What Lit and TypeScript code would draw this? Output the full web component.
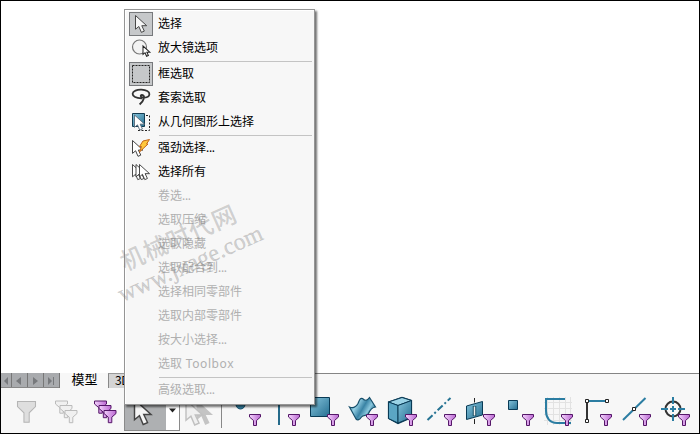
import { LitElement, html, svg, css } from "lit";
import { customElement } from "lit/decorators.js";

type Item = { text: string; icon?: string; boxed?: boolean; off?: boolean; line?: boolean };

const items: Item[] = [
  { text: "选择", icon: "cursor", boxed: true },
  { text: "放大镜选项", icon: "magnify" },
  { text: "框选取", icon: "box", boxed: true, line: true },
  { text: "套索选取", icon: "lasso" },
  { text: "从几何图形上选择", icon: "geometry" },
  { text: "强劲选择...", icon: "power", line: true },
  { text: "选择所有", icon: "all" },
  { text: "卷选...", off: true },
  { text: "选取压缩", off: true },
  { text: "选取隐藏", off: true },
  { text: "选取配合到...", off: true },
  { text: "选择相同零部件", off: true },
  { text: "选取内部零部件", off: true },
  { text: "按大小选择...", off: true },
  { text: "选取 Toolbox", off: true },
  { text: "高级选取...", off: true, line: true },
];

const arrow = "M0 0V14L3.4 11.2L6 17.2L9 15.9L6.4 10.4L11.4 10.4Z";

const menuIcons: Record<string, unknown> = {
  cursor: svg`<path d=${arrow} transform="translate(6.5 3.5) scale(.98)" fill="#f6f6f6" stroke="#444"/>`,
  magnify: svg`<circle cx="10.5" cy="11" r="7" fill="#f3f3f3" stroke="#777" stroke-width="1.2"/>
    <path d=${arrow} transform="translate(14 10) scale(.6)" fill="#fff" stroke="#222" stroke-width="1.7"/>`,
  box: svg`<rect x="3.5" y="3.5" width="17" height="17" fill="#c6c8ca" stroke="#222" stroke-dasharray="2 1"/>`,
  lasso: svg`<path d="M13 12.3C7 12.5 3.5 10.3 3.6 7.8C3.8 5 8 3.5 12.5 3.7C17 3.9 20.6 5.5 20.4 8.2C20.2 10.5 17 11.7 14 11.7C11.5 11.6 11 8.8 13 9C16.5 9.4 15.5 14 10.6 18.5" fill="none" stroke="#333" stroke-width="1.8"/>`,
  geometry: svg`<path d="M3.5 3.5H15.5V16.5H3.5Z" fill="url(#blue)" stroke="#123b50"/>
    <path d="M17 5.5H20.5V20.5H8" fill="none" stroke="#222" stroke-dasharray="2 1.5"/>
    <path d=${arrow} transform="translate(5.5 5) scale(.88)" fill="#fff" stroke="#567"/>`,
  power: svg`<path d=${arrow} transform="translate(3.5 4.5) scale(.92)" fill="#fff" stroke="#333"/>
    <path d="M14 5L20.5 3.5L17.5 8H19L10.5 16L12.5 10.5H10.5Z" fill="#ffc83d" stroke="#c4661a"/>`,
  all: svg`<g fill="#fff" stroke="#333"><path d=${arrow} transform="translate(3.5 4.5) scale(.88)"/>
    <path d=${arrow} transform="translate(7 4.5) scale(.88)"/><path d=${arrow} transform="translate(10.5 4.5) scale(.88)"/></g>`,
};

const filters = [
  svg`<circle cx="15.5" cy="15.5" r="4.5" fill="#3583a5" stroke="#164f6b"/>`,
  svg`<path d="M15 6V36" stroke="#256a8a" stroke-width="2"/>`,
  svg`<path d="M7.5 8.5H26.5V27.5H7.5Z" fill="url(#blue)" stroke="#093a55"/>`,
  svg`<path d="M7.5 18C11 19.5 14 18 16 14.5C17.5 11 18.5 8.5 20.5 9.5C23 12 25 12 27.5 8.5L33.5 18C30 18.5 28 21 26.5 24.5C25 27.5 21.5 25.5 19.5 28C17.5 31 15.5 31.5 14 30Z" fill="url(#wave)" stroke="#164e6a" stroke-width="1.2"/>`,
  svg`<path d="M7.5 13L21 8.5L30.5 11.5V28.5L17 34.5L7.5 29.5Z" fill="url(#wave)" stroke="#093a55" stroke-width="1.2"/>
    <path d="M7.5 13L21 8.5L30.5 11.5L17 16.5Z" fill="#9bd3e6" stroke="#093a55"/><path d="M7.5 13L17 16.5V34L7.5 29.5Z" fill="#5ba6c4" stroke="#093a55"/><path d="M17 16.5L30.5 11.5V28.5L17 34Z" fill="url(#blue)" stroke="#093a55"/>`,
  svg`<path d="M7.5 31L30.5 9" stroke="#267393" stroke-width="2" stroke-dasharray="7 2.5 2 2.5"/>`,
  svg`<path d="M15.5 9V13.5M15.5 30V35" stroke="#222"/><path d="M7.5 17L23.5 12.5V26L7.5 30.5Z" fill="url(#blue)" stroke="#093a55"/><path d="M15.5 17V27" stroke="#174d63" stroke-width="3.5"/><path d="M15.5 17.5V26.5" stroke="#eee" stroke-width="1.5"/>`,
  svg`<path d="M10.5 11.5H19.5V20.5H10.5Z" fill="url(#blue)" stroke="#093a55"/>`,
  svg`<path d="M10.5 8V36M16.5 8V36M22.5 8V36M28.5 8V36M33.5 8V36M7 13.5H35M7 19.5H35M7 25.5H35M7 31.5H35" stroke="#e2e2e2"/><path d="M28 10H9V22C9 29 13 34 20 34H34" fill="none" stroke="#2b7da2" stroke-width="2"/>`,
  svg`<path d="M11 12V32" stroke="#333" stroke-width="2"/><path d="M12 12H31" stroke="#2b7da2" stroke-width="2"/><path d="M9.5 10.5H12.5V13.5H9.5ZM29.5 10.5H32.5V13.5H29.5ZM9.5 30.5H12.5V33.5H9.5Z" fill="#fff" stroke="#222"/>`,
  svg`<path d="M8 31L30.5 9" stroke="#2b7da2" stroke-width="2"/><path d="M17.5 18.5H20.5V21.5H17.5Z" fill="#fff" stroke="#222"/>`,
  svg`<circle cx="19" cy="20" r="7.5" fill="none" stroke="#333" stroke-width="2"/><path d="M19 8V15M19 25V32M7 20H14M24 20H31M19 17V23M16 20H22" stroke="#2b7da2" stroke-width="2"/>`,
];

const smallFunnel = svg`<path d="M24.5 25.5H35.5V28L31.5 31.5V36.5H28.5V31.5L24.5 28Z" fill="url(#purple)" stroke="#541768"/>`;
const funnel = "M0 0H12V3L7.8 6.7V12.2H4.3V6.7L0 3Z";

@customElement("app-root")
export class AppRoot extends LitElement {
  static styles = css`
    :host { display: block; width: 700px; height: 434px; font: 12px/24px "Noto Sans CJK SC", sans-serif; color: #000; }
    .window { box-sizing: border-box; width: 700px; height: 434px; border: 1px solid #000; background: #fff; display: flex; flex-direction: column; justify-content: flex-end; position: relative; overflow: hidden; }
    svg { display: block; }
    .tabs { display: flex; height: 16px; line-height: 12px; background: #f7f7f7; }
    .scroll { display: flex; width: 58px; background: #a9abae; height: 15px; border-right: 1px solid #777; }
    .tab { width: 47px; text-align: center; font-size: 13px; padding-left: 1px; }
    .next { box-sizing: border-box; width: 60px; height: 15px; padding-left: 6px; letter-spacing: -.5px; border-top: 1px solid #999; border-left: 1px solid #888; background: #d4d4d4; }
    .rest { flex: 1; border-top: 1px solid #858585; }
    .bar { display: flex; height: 44px; background: #f7f7f7; }
    .left { width: 123px; flex: none; }
    .button { box-sizing: border-box; width: 56px; height: 42px; border: 1px solid #8a8a8a; background: linear-gradient(90deg, #aeb0b2 41px, #fff 41px); }
    .ghost { width: 41px; }
    .divider { width: 1px; height: 24px; margin: 15px 3px 0 0; background: #888; }
    .filter { flex: none; width: 39px; }
    .menu { box-sizing: border-box; position: absolute; left: 123px; top: 8px; width: 191px; height: 396px; padding: 2px 1px 0 4px; background: #f7f7f7; border: 1px solid #959595; box-shadow: inset 1px 1px #fff, 2px 2px 2px rgba(0,0,0,.55); }
    .item { display: flex; height: 24px; }
    .icon { box-sizing: border-box; width: 24px; height: 24px; margin-right: 5px; }
    .icon.boxed { background: #c6c8ca; box-shadow: inset 0 0 0 1px #77797c; }
    .label { height: 24px; line-height: 22px; white-space: pre; }
    .off { color: #b0b0b0; }
    .latin { font-family: "Noto Sans", sans-serif; letter-spacing: .6px; }
    .dots { letter-spacing: -.3px; }
    .line { height: 1px; margin: 1px 1px 0 30px; background: #c4c4c4; }
    .mark { position: absolute; white-space: nowrap; color: rgba(110,110,110,.3); transform-origin: 0 50%; transform: rotate(-24deg); line-height: 30px; }
    .site { left: 120px; top: 246px; font-size: 24px; font-weight: 500; letter-spacing: 1px; }
    .url { left: 118px; top: 279px; font-family: "Liberation Serif", serif; font-size: 24px; -webkit-text-stroke: .5px rgba(110,110,110,.2); }
  `;

  label(text: string) {
    const [, cjk, latin] = text.match(/^([^ .]*)(.*)$/)!;
    return html`<span class="label">${cjk}<span class="latin ${latin === "..." ? "dots" : ""}">${latin}</span></span>`;
  }

  render() {
    return html`<div class="window">
      <div class="tabs">
        <div class="scroll"><svg width="58" height="15"><path d="M10.5 0V15M26.5 0V15M42.5 0V15" stroke="#777"/><path d="M7 4V12L3 8ZM20 4V12L15 8ZM32 4V12L37 8ZM47 4V12L51 8ZM52 4H53V12H52Z" fill="#77797c"/><path d="M0 14.5H58" stroke="#888"/></svg></div>
        <div class="tab">模型</div><div class="next">3D</div><div class="rest"></div>
      </div>
      <div class="bar">
        <svg class="left" width="123" height="44">
          ${this.defs()}
          <path d=${funnel} transform="translate(16.5 12.5) scale(1.5 1.7)" fill="#dedede" stroke="#b5b5b5" stroke-width=".7"/>
          <g fill="#f0f0f0" stroke="#bbb">${this.stack(54.5)}</g>
          <g fill="url(#purple)" stroke="#541768">${this.stack(93.5)}</g>
        </svg>
        <div class="button"><svg width="54" height="40"><path d=${arrow} transform="translate(9.5 9.5) scale(1.45)" fill="#f5f5f5" stroke="#444"/><path d="M44 18.5H51L47.5 22.5Z" fill="#222"/></svg></div>
        <svg class="ghost" width="41" height="44"><path d=${arrow} transform="translate(16.5 11) scale(1.45)" fill="#c4c4c4"/><path d=${arrow} transform="translate(6 11) scale(1.45)" fill="#f0f0f0" stroke="#c0c0c0"/></svg>
        <div class="divider"></div>
        ${filters.map((f) => html`<svg class="filter" width="39" height="43">${this.defs()}${f}${smallFunnel}</svg>`)}
      </div>
      <div class="menu">${items.map((i) => html`
        ${i.line ? html`<div class="line"></div>` : ""}
        <div class="item ${i.off ? "off" : ""}"><div class="icon ${i.boxed ? "boxed" : ""}">
          ${i.icon ? html`<svg width="24" height="24">${this.defs()}${menuIcons[i.icon]}</svg>` : ""}</div>${this.label(i.text)}</div>`)}
      </div>
      <div class="mark site">机械时代网</div><div class="mark url">www.jxage.com</div>
    </div>`;
  }

  stack(x: number) {
    return [[0, 0], [4.5, 4.5], [9.5, 9.5]].map(([a, b]) => svg`<path d=${funnel} transform="translate(${x + a} ${12 + b})"/>`);
  }

  defs() {
    return svg`<defs>
      <linearGradient id="blue" x1="0" y1="0" x2="1" y2="1"><stop stop-color="#85c4dc"/><stop offset="1" stop-color="#256f91"/></linearGradient>
      <linearGradient id="wave" x1="0" y1="0" x2="1" y2=".5"><stop stop-color="#29789c"/><stop offset=".35" stop-color="#94cfe4"/><stop offset=".6" stop-color="#3983a5"/><stop offset=".8" stop-color="#8ac7dd"/><stop offset="1" stop-color="#256f91"/></linearGradient>
      <linearGradient id="purple"><stop stop-color="#f3d2fc"/><stop offset="1" stop-color="#bb68d2"/></linearGradient>
    </defs>`;
  }
}
